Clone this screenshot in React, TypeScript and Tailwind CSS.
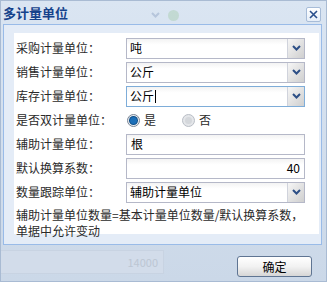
import React from "react";

const font = { fontFamily: '"Noto Sans CJK SC", "Noto Sans", sans-serif' };

function Chevron() {
  return (
    <svg width="9" height="6" viewBox="0 0 9 6">
      <path d="M1 1 L4.5 4.5 L8 1" fill="none" stroke="#2d4f86" strokeWidth="2" />
    </svg>
  );
}

function Combo({ value, focused, caret }: { value: string; focused?: boolean; caret?: boolean }) {
  return (
    <div
      className={`flex h-[21px] w-[179px] border bg-gradient-to-b from-[#f3f3f3] to-white to-[30%] ${
        focused ? "border-[#7eadd9]" : "border-[#b5b8c8]"
      }`}
    >
      <div className="flex flex-1 items-center pl-[3px] text-[12px] leading-none text-black">
        {value}
        {caret && <span className="ml-[1px] inline-block h-[13px] w-px bg-black" />}
      </div>
      <div className="flex w-[17px] items-center justify-center border-l border-[#d0d3dc] bg-gradient-to-br from-[#f6f6f6] to-[#cfcfcf]">
        <Chevron />
      </div>
    </div>
  );
}

function Field({ value, right }: { value: string; right?: boolean }) {
  return (
    <div
      className={`flex h-[21px] w-[179px] items-center border border-[#b5b8c8] bg-gradient-to-b from-[#f3f3f3] to-white to-[30%] px-[4px] text-[12px] leading-none text-black ${
        right ? "justify-end" : ""
      }`}
    >
      {value}
    </div>
  );
}

function Row({ label, children }: { label: string; children: React.ReactNode }) {
  return (
    <div className="flex h-[24px] items-center">
      <div className="w-[110px] text-[12px] leading-none text-[#2a2a2a]">{label}</div>
      {children}
    </div>
  );
}

function Radio({ checked, label }: { checked?: boolean; label: string }) {
  return (
    <div className="flex items-center gap-[4px]">
      <span
        className={`flex h-[13px] w-[13px] items-center justify-center rounded-full border ${
          checked ? "border-[#7c8796] bg-[#e9edf2]" : "border-[#b9bec6] bg-[#e4e6e9]"
        }`}
      >
        {checked && <span className="h-[7px] w-[7px] rounded-full bg-[#1c6fb8] shadow-[0_0_0_1px_#0d4c86]" />}
        {!checked && <span className="h-[7px] w-[7px] rounded-full bg-[#d4d7db]" />}
      </span>
      <span className="text-[12px] leading-none text-[#2a2a2a]">{label}</span>
    </div>
  );
}

export default function App() {
  return (
    <div
      className="relative h-[282px] w-[327px] overflow-hidden border border-[#a9bbd3] bg-gradient-to-b from-[#dae5f2] to-[#cbd8e8]"
      style={font}
    >
      {/* ghost content behind the window */}
      <div className="absolute left-[146px] top-[4px] flex h-[20px] w-[17px] items-center justify-center opacity-20">
        <Chevron />
      </div>
      <div className="absolute left-[167px] top-[9px] h-[11px] w-[11px] rounded-full bg-[#8fbf8a] opacity-30" />
      <div className="absolute left-[-1px] top-[249px] flex h-[24px] w-[164px] items-center justify-end border border-[#c8d3e2] bg-[#d2dcea] pr-[5px] text-[11px] text-[#bcc6d3]">
        14000
      </div>

      {/* title bar */}
      <div className="flex h-[23px] items-center pl-[2px]">
        <span className="text-[13px] font-bold leading-none text-[#15428b]">多计量单位</span>
      </div>
      <div className="absolute left-[305px] top-[6px] flex h-[15px] w-[15px] items-center justify-center rounded-[2px] border border-[#a7bcd8] bg-gradient-to-b from-white to-[#e6eef8]">
        <svg width="9" height="9" viewBox="0 0 9 9">
          <path d="M1 1 L8 8 M8 1 L1 8" stroke="#2a4f8c" strokeWidth="1.6" />
        </svg>
      </div>

      {/* body panel */}
      <div className="ml-[2px] h-[221px] w-[319px] border border-[#99bbe8] bg-[#e4ecf7] pb-[10px] pl-[10px] pr-[2px] pt-[8px]">
        <div className="h-full bg-white pl-[2px] pt-[3px]">
          <Row label="采购计量单位：">
            <Combo value="吨" />
          </Row>
          <Row label="销售计量单位：">
            <Combo value="公斤" />
          </Row>
          <Row label="库存计量单位：">
            <Combo value="公斤" focused caret />
          </Row>
          <Row label="是否双计量单位：">
            <div className="flex gap-[26px] pl-[1px]">
              <Radio checked label="是" />
              <Radio label="否" />
            </div>
          </Row>
          <Row label="辅助计量单位：">
            <Field value="根" />
          </Row>
          <Row label="默认换算系数：">
            <Field value="40" right />
          </Row>
          <Row label="数量跟踪单位：">
            <Combo value="辅助计量单位" />
          </Row>
          <div className="pt-[3px] text-[12px] leading-[16px] text-[#2a2a2a]">
            <div>辅助计量单位数量=基本计量单位数量/默认换算系数，</div>
            <div>单据中允许变动</div>
          </div>
        </div>
      </div>

      {/* footer */}
      <div className="flex justify-end pr-[14px] pt-[11px]">
        <button className="h-[21px] w-[75px] rounded-[3px] border border-[#5f7593] bg-gradient-to-b from-white via-[#f2f2f2] to-[#d6d6d6] text-[12px] leading-none text-black">
          确定
        </button>
      </div>
    </div>
  );
}
